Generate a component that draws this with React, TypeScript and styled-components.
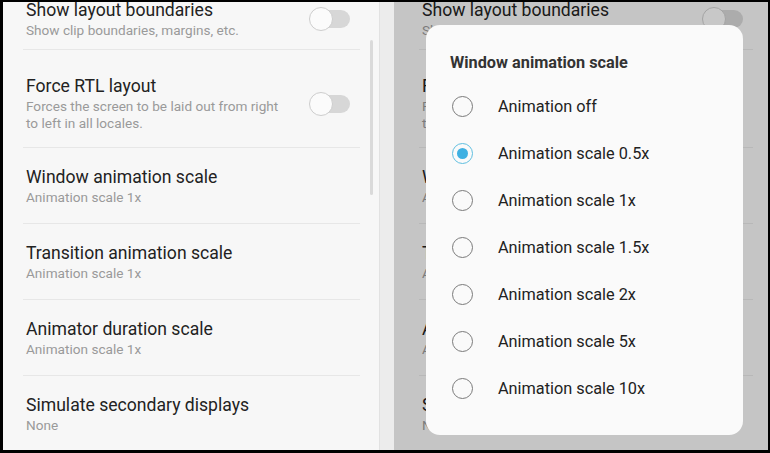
import React from "react";
import styled, { createGlobalStyle } from "styled-components";

const Global = createGlobalStyle`
  html, body { margin: 0; padding: 0; background: #000; }
  body { font-family: Roboto, "Noto Sans", "Liberation Sans", sans-serif; }
  * { box-sizing: border-box; }
`;

const Frame = styled.div`
  width: 770px;
  height: 453px;
  background: #000;
  padding: 2px 2px 3px 3px;
  display: flex;
  overflow: hidden;
`;

const Panel = styled.div<{ $w?: number }>`
  position: relative;
  flex: ${(p) => (p.$w ? `0 0 ${p.$w}px` : "1 1 auto")};
  background: #f7f7f7;
  overflow: hidden;
`;

const Strip = styled.div`
  flex: 0 0 15px;
  background: #ececec;
  border-left: 1px solid #e2e2e2;
`;

const List = styled.div`
  display: flex;
  flex-direction: column;
  margin-top: -3px;
`;

const Row = styled.div<{ $inset: number; $end: number; $pt: number; $pb: number; $last?: boolean }>`
  display: flex;
  align-items: center;
  margin: 0 ${(p) => p.$end}px 0 ${(p) => p.$inset - 3}px;
  padding: ${(p) => p.$pt}px 10px ${(p) => p.$pb}px 3px;
  border-bottom: ${(p) => (p.$last ? "none" : "1px solid #e7e7e7")};
`;

const Texts = styled.div`
  flex: 1;
  min-width: 0;
  display: flex;
  flex-direction: column;
`;

const Title = styled.div`
  font-size: 17.6px;
  line-height: 22px;
  color: #222;
  white-space: nowrap;
`;

const Sub = styled.div`
  font-size: 13.6px;
  line-height: 17px;
  margin-top: 1px;
  color: #9a9a9a;
  white-space: nowrap;
`;

const Track = styled.div`
  position: relative;
  width: 40px;
  height: 18px;
  border-radius: 9px;
  background: #d7d7d7;
  flex: 0 0 auto;
`;

const Thumb = styled.div`
  position: absolute;
  left: -1px;
  top: -3px;
  width: 24px;
  height: 24px;
  border-radius: 50%;
  background: #fbfbfb;
  border: 1px solid #cdcdcd;
`;

const Scrollbar = styled.div`
  position: absolute;
  left: 367px;
  top: 38px;
  width: 3px;
  height: 155px;
  border-radius: 2px;
  background: #dadada;
`;

const Scrim = styled.div`
  position: absolute;
  inset: 0;
  background: rgba(0, 0, 0, 0.2);
`;

const Dialog = styled.div`
  position: absolute;
  left: 32px;
  top: 23px;
  width: 317px;
  height: 410px;
  background: #fafafa;
  border-radius: 14px;
  padding: 27px 0 0 24px;
  display: flex;
  flex-direction: column;
`;

const DialogTitle = styled.div`
  font-size: 16.3px;
  line-height: 22px;
  font-weight: 700;
  color: #333;
  margin-bottom: 9px;
`;

const Option = styled.div`
  display: flex;
  align-items: center;
  height: 47px;
`;

const RadioOuter = styled.div<{ $on?: boolean }>`
  width: 21px;
  height: 21px;
  margin-left: 2px;
  border-radius: 50%;
  border: 1.5px solid ${(p) => (p.$on ? "#5fbfe0" : "#7a7a7a")};
  display: flex;
  align-items: center;
  justify-content: center;
  flex: 0 0 auto;
`;

const RadioDot = styled.div`
  width: 11px;
  height: 11px;
  border-radius: 50%;
  background: #3fb0e2;
`;

const OptionLabel = styled.div`
  margin-left: 25px;
  font-size: 16.3px;
  color: #222;
`;

type Item = { title: string; sub: string[]; toggle?: boolean; pt: number; pb: number };

const items: Item[] = [
  { title: "Show layout boundaries", sub: ["Show clip boundaries, margins, etc."], toggle: true, pt: 0, pb: 10 },
  { title: "Force RTL layout", sub: ["Forces the screen to be laid out from right", "to left in all locales."], toggle: true, pt: 25, pb: 15 },
  { title: "Window animation scale", sub: ["Animation scale 1x"], pt: 18, pb: 17 },
  { title: "Transition animation scale", sub: ["Animation scale 1x"], pt: 18, pb: 17 },
  { title: "Animator duration scale", sub: ["Animation scale 1x"], pt: 18, pb: 17 },
  { title: "Simulate secondary displays", sub: ["None"], pt: 18, pb: 17 },
];

const SettingsList: React.FC<{ inset: number; end: number }> = ({ inset, end }) => (
  <List>
    {items.map((it, i) => (
      <Row key={it.title} $inset={inset} $end={end} $pt={it.pt} $pb={it.pb} $last={i === items.length - 1}>
        <Texts>
          <Title>{it.title}</Title>
          <Sub>
            {it.sub.map((s) => (
              <div key={s}>{s}</div>
            ))}
          </Sub>
        </Texts>
        {it.toggle && (
          <Track>
            <Thumb />
          </Track>
        )}
      </Row>
    ))}
  </List>
);

const options = [
  "Animation off",
  "Animation scale 0.5x",
  "Animation scale 1x",
  "Animation scale 1.5x",
  "Animation scale 2x",
  "Animation scale 5x",
  "Animation scale 10x",
];

export default function App() {
  return (
    <>
      <Global />
      <Frame>
        <Panel $w={376}>
          <SettingsList inset={23} end={19} />
          <Scrollbar />
        </Panel>
        <Strip />
        <Panel>
          <SettingsList inset={28} end={15} />
          <Scrim />
          <Dialog>
            <DialogTitle>Window animation scale</DialogTitle>
            {options.map((o, i) => (
              <Option key={o}>
                <RadioOuter $on={i === 1}>{i === 1 && <RadioDot />}</RadioOuter>
                <OptionLabel>{o}</OptionLabel>
              </Option>
            ))}
          </Dialog>
        </Panel>
      </Frame>
    </>
  );
}
